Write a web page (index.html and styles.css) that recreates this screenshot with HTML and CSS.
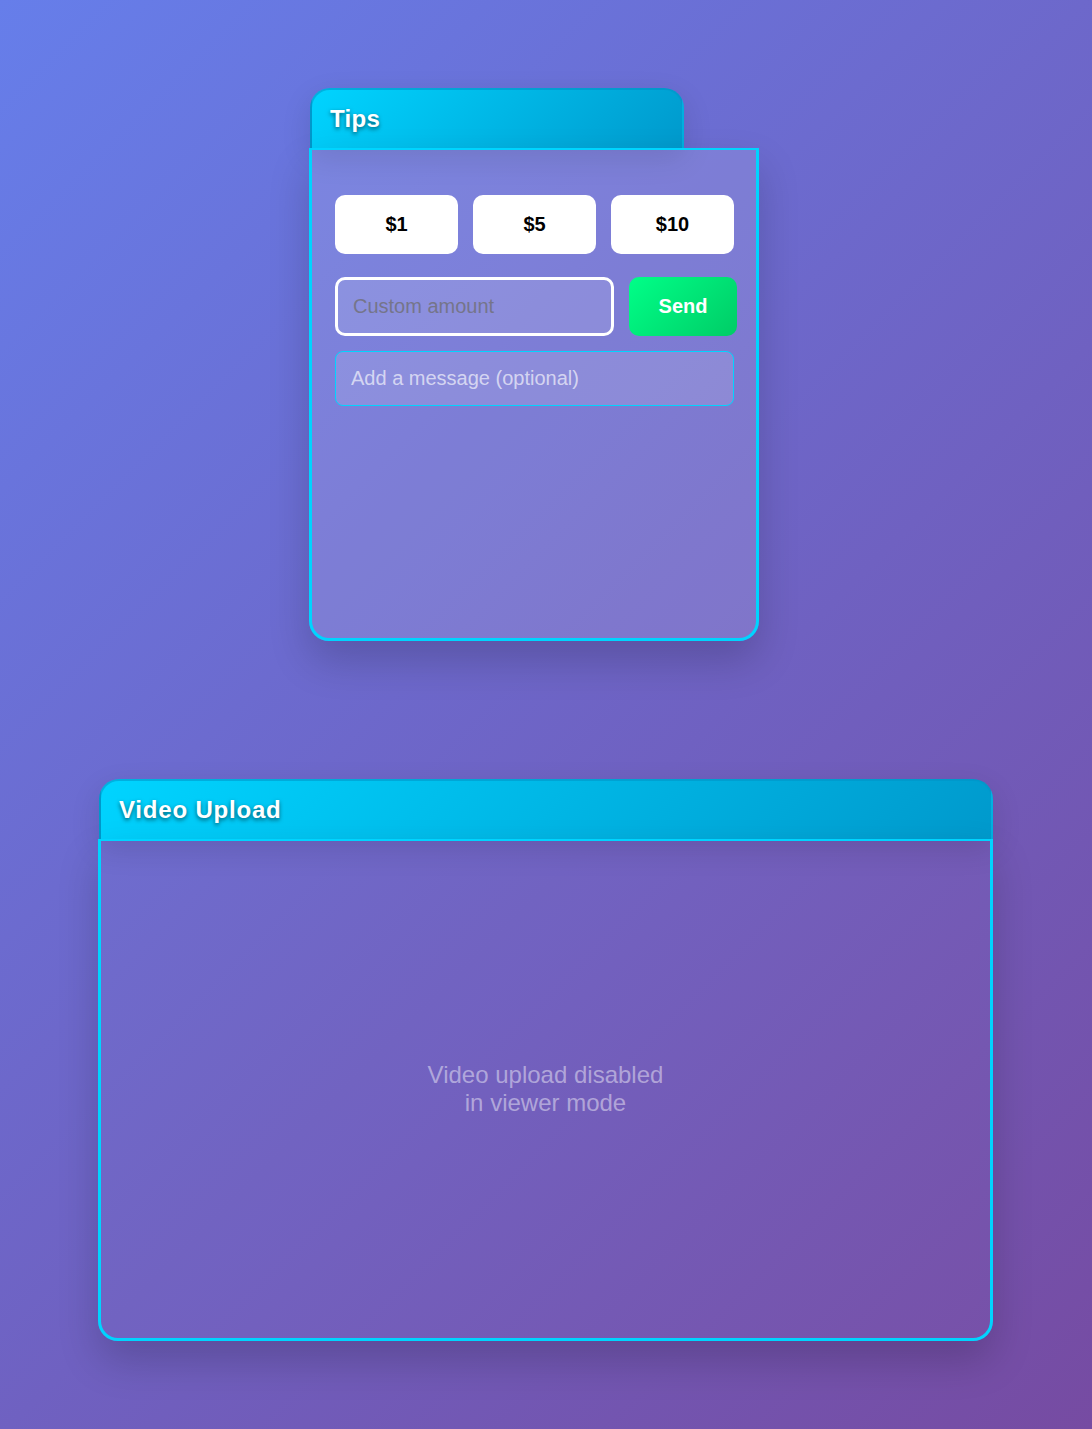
FILE: index.html
```html
<!DOCTYPE html>
<html>
<head>
<meta charset="utf-8">
<link rel="stylesheet" href="styles.css">
</head>
<body>
<div class="page">
  <section class="panel tips">
    <div class="tab tips-tab"><h2>Tips</h2></div>
    <div class="body tips-body">
      <div class="amounts">
        <button class="amt">$1</button>
        <button class="amt">$5</button>
        <button class="amt">$10</button>
      </div>
      <div class="custom-row">
        <input class="custom" type="text" placeholder="Custom amount">
        <button class="send">Send</button>
      </div>
      <input class="message" type="text" placeholder="Add a message (optional)">
    </div>
  </section>

  <section class="panel video">
    <div class="tab video-tab"><h2>Video Upload</h2></div>
    <div class="body video-body">
      <p class="disabled">Video upload disabled<br>in viewer mode</p>
    </div>
  </section>
</div>
</body>
</html>
```

FILE: styles.css
```css
* { box-sizing: border-box; }
html, body { margin: 0; padding: 0; }
body {
  width: 1092px;
  min-height: 1429px;
  background: linear-gradient(135deg, #667eea 0%, #764ba2 100%);
  font-family: "Liberation Sans", Arial, sans-serif;
}
.page {
  display: flex;
  flex-direction: column;
  padding-top: 88px;
}
.panel {
  display: flex;
  flex-direction: column;
}
.tips { margin-left: 309px; width: 450px; }
.video { margin-left: 98px; width: 895px; margin-top: 138px; }

.tab {
  height: 60px;
  margin-left: 1px;
  border-radius: 20px 20px 0 0;
  background: linear-gradient(135deg, #00d4ff 0%, #0099cc 100%);
  border: 2px solid rgba(0, 150, 200, 0.55);
  border-bottom: none;
  display: flex;
  align-items: center;
  padding-left: 18px;
  box-shadow: 0 10px 30px rgba(0,0,0,0.12);
}
.tab h2 {
  margin: 0;
  color: #fff;
  font-weight: bold;
  font-size: 24px;
  text-shadow: 0 2px 4px rgba(0,0,0,0.55);
}
.tips-tab { width: 374px; }
.tips-tab h2 { letter-spacing: 0.3px; }
.video-tab { width: 894px; }
.video-tab h2 { letter-spacing: 0.8px; }

.body {
  border: 3px solid #00d4ff;
  border-top-width: 2px;
  border-radius: 0 0 20px 20px;
  box-shadow: 0 20px 40px rgba(0,0,0,0.18);
}
.tips-body {
  height: 493px;
  background: rgba(255,255,255,0.12);
  padding: 45px 23px 0 23px;
  display: flex;
  flex-direction: column;
}
.amounts {
  display: flex;
  gap: 15px;
  width: 399px;
}
.amt {
  width: 123px;
  height: 59px;
  border: none;
  border-radius: 10px;
  background: #fff;
  color: #000;
  font-family: "Liberation Sans", Arial, sans-serif;
  font-weight: bold;
  font-size: 20px;
  padding: 0;
}
.custom-row {
  display: flex;
  gap: 15px;
  margin-top: 23px;
}
.custom {
  flex-shrink: 0;
  width: 279px;
  height: 59px;
  border: 3px solid #fff;
  border-radius: 10px;
  background: rgba(255,255,255,0.12);
  font-family: "Liberation Sans", Arial, sans-serif;
  font-size: 20px;
  padding: 0 15px;
  outline: none;
}
.custom::placeholder { color: #75758a; }
.send {
  flex-shrink: 0;
  width: 108px;
  height: 59px;
  border: none;
  border-radius: 10px;
  background: linear-gradient(135deg, #00ff88 0%, #00cc66 100%);
  color: #fff;
  font-family: "Liberation Sans", Arial, sans-serif;
  font-weight: bold;
  font-size: 20px;
  padding: 0;
}
.message {
  margin-top: 15px;
  width: 399px;
  height: 55px;
  border: 1px solid #00d4ff;
  border-radius: 8px;
  background: rgba(255,255,255,0.12);
  font-family: "Liberation Sans", Arial, sans-serif;
  font-size: 20px;
  padding: 0 15px;
  outline: none;
}
.message::placeholder { color: rgba(255,255,255,0.65); }

.video-body {
  height: 502px;
  background: rgba(255,255,255,0.015);
  display: flex;
  align-items: center;
  justify-content: center;
}
.disabled {
  margin: 0;
  text-align: center;
  color: rgba(255,255,255,0.45);
  font-size: 24px;
  line-height: 28px;
  padding-bottom: 2px;
}
```
